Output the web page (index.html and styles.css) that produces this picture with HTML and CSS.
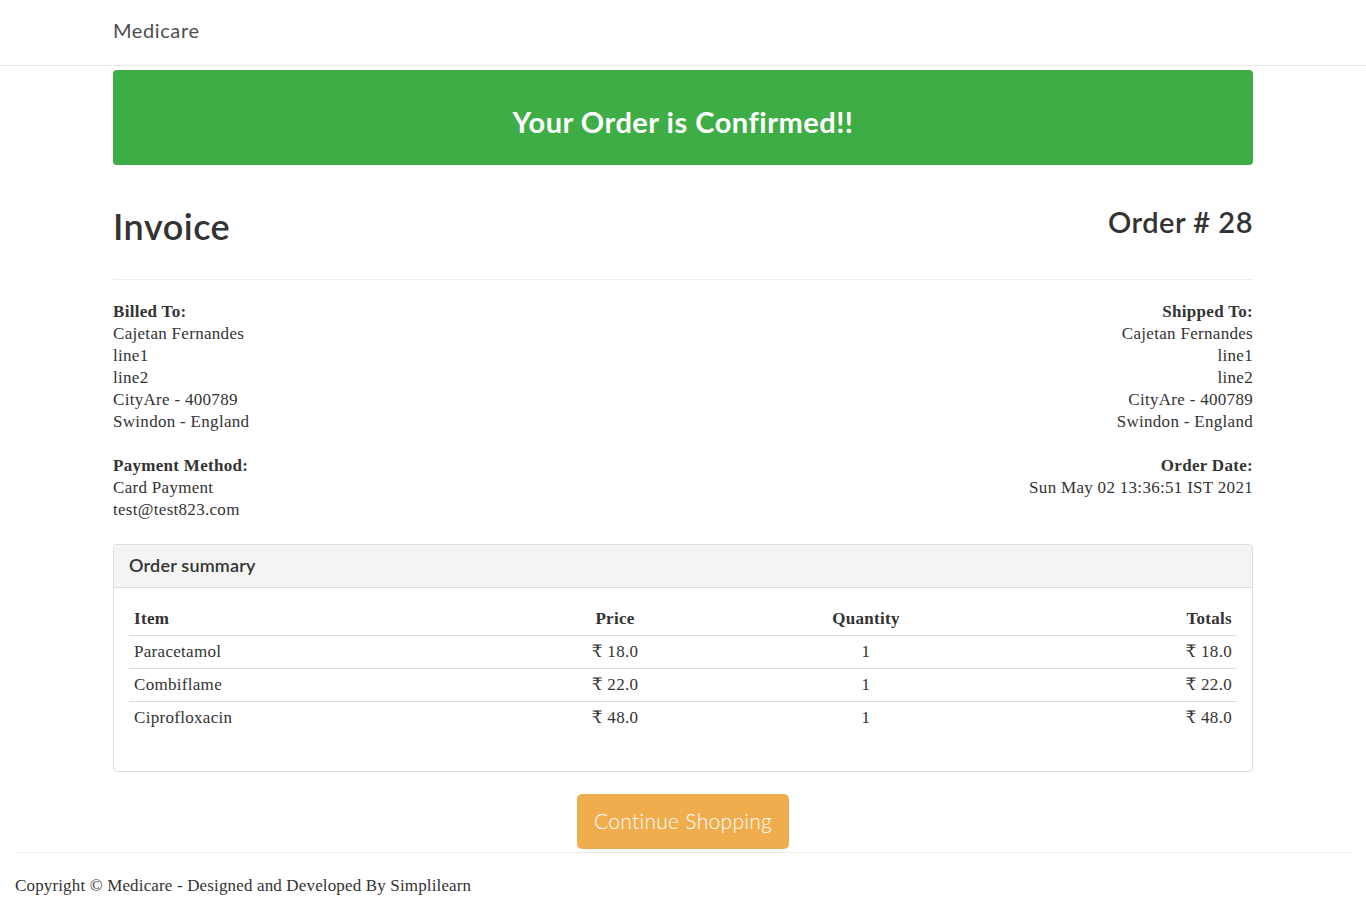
FILE: index.html
```html
<!DOCTYPE html>
<html>
<head>
<meta charset="utf-8">
<title>Medicare</title>
<link rel="stylesheet" href="styles.css">
</head>
<body>
<nav class="navbar">
  <div class="container">
    <a class="brand" href="#">Medicare</a>
  </div>
</nav>
<main class="container">
  <div class="alert-success">
    <h2 class="alert-title">Your Order is Confirmed!!</h2>
  </div>
  <div class="invoice-title">
    <h2 class="invoice-h">Invoice</h2>
    <h3 class="order-h">Order # 28</h3>
  </div>
  <hr class="rule">
  <div class="info-row">
    <address class="addr">
      <strong>Billed To:</strong><br>
      Cajetan Fernandes<br>
      line1<br>
      line2<br>
      CityAre - 400789<br>
      Swindon - England
    </address>
    <address class="addr right">
      <strong>Shipped To:</strong><br>
      Cajetan Fernandes<br>
      line1<br>
      line2<br>
      CityAre - 400789<br>
      Swindon - England
    </address>
  </div>
  <div class="info-row">
    <address class="addr">
      <strong>Payment Method:</strong><br>
      Card Payment<br>
      test@test823.com
    </address>
    <address class="addr right">
      <strong>Order Date:</strong><br>
      Sun May 02 13:36:51 IST 2021
    </address>
  </div>
  <div class="panel">
    <div class="panel-heading">
      <h3 class="panel-title">Order summary</h3>
    </div>
    <div class="panel-body">
      <table class="table">
        <thead>
          <tr>
            <th class="c-item">Item</th>
            <th class="c-price">Price</th>
            <th class="c-qty">Quantity</th>
            <th class="c-total">Totals</th>
          </tr>
        </thead>
        <tbody>
          <tr><td>Paracetamol</td><td class="c-price">₹ 18.0</td><td class="c-qty">1</td><td class="c-total">₹ 18.0</td></tr>
          <tr><td>Combiflame</td><td class="c-price">₹ 22.0</td><td class="c-qty">1</td><td class="c-total">₹ 22.0</td></tr>
          <tr><td>Ciprofloxacin</td><td class="c-price">₹ 48.0</td><td class="c-qty">1</td><td class="c-total">₹ 48.0</td></tr>
        </tbody>
      </table>
    </div>
  </div>
  <div class="actions">
    <a class="btn-warning" href="#">Continue Shopping</a>
  </div>
</main>
<footer class="footer">
  <hr class="footer-rule">
  <p class="copy">Copyright © Medicare - Designed and Developed By Simplilearn</p>
</footer>
</body>
</html>
```
FILE: styles.css
```css
* { box-sizing: border-box; }
html, body { margin: 0; padding: 0; }
body {
  font-family: "Liberation Serif", "DejaVu Serif", serif;
  font-size: 17px;
  letter-spacing: 0.3px;
  line-height: 22px;
  color: #333333;
  background: #ffffff;
}
.container {
  width: 1140px;
  margin: 0 auto;
}
.navbar {
  height: 66px;
  border-bottom: 1px solid #e7e7e7;
}
.navbar .container {
  height: 65px;
  display: flex;
  align-items: center;
}
.brand {
  font-family: "Lato", "Open Sans", sans-serif;
  font-size: 20px;
  letter-spacing: 0.6px;
  color: #4d4d4d;
  text-decoration: none;
  padding-bottom: 5px;
}
.alert-success {
  margin-top: 4px;
  height: 95px;
  background: #3fad46;
  border-radius: 4px;
  display: flex;
  align-items: center;
  justify-content: center;
}
.alert-title {
  margin: 0;
  padding-top: 8px;
  font-family: "Lato", "Open Sans", sans-serif;
  font-weight: 700;
  font-size: 29px;
  letter-spacing: 0.5px;
  color: #ffffff;
}
.invoice-title {
  display: flex;
  justify-content: space-between;
  align-items: flex-start;
  margin-top: 40px;
  height: 74px;
}
.invoice-h {
  margin: 0;
  font-family: "Lato", "Open Sans", sans-serif;
  font-weight: 600;
  font-size: 36px;
  letter-spacing: 0.5px;
  line-height: 42px;
  color: #333;
}
.order-h {
  margin: 0;
  font-family: "Lato", "Open Sans", sans-serif;
  font-weight: 600;
  font-size: 29px;
  letter-spacing: 0.5px;
  line-height: 34px;
  color: #333;
}
.rule {
  margin: 0 0 21px 0;
  border: 0;
  border-top: 1px solid #eeeeee;
}
.info-row {
  display: flex;
  justify-content: space-between;
}
.addr {
  font-style: normal;
  margin: 0 0 22px 0;
}
.addr.right { text-align: right; }
.panel {
  margin-top: 1px;
  border: 1px solid #dddddd;
  border-radius: 4px;
}
.panel-heading {
  background: #f4f4f4;
  border-bottom: 1px solid #dddddd;
  border-radius: 3px 3px 0 0;
  padding: 0 15px 3px;
  height: 43px;
  display: flex;
  align-items: center;
}
.panel-title {
  margin: 0;
  font-family: "Lato", "Open Sans", sans-serif;
  font-weight: 600;
  font-size: 18px;
  letter-spacing: 0.2px;
  color: #333;
}
.panel-body {
  padding: 15px 15px 17px;
}
.table {
  width: 100%;
  border-collapse: collapse;
  margin-bottom: 20px;
}
.table th, .table td {
  padding: 5px;
  line-height: 22px;
}
.table th {
  border-bottom: 1px solid #dddddd;
  font-weight: 700;
}
.table tbody tr + tr td { border-top: 1px solid #dddddd; }
.c-item { text-align: left; width: 396px; }
.c-price { text-align: center; width: 180px; }
.c-qty { text-align: center; width: 322px; }
.c-total { text-align: right; }
.actions {
  margin-top: 22px;
  display: flex;
  justify-content: center;
}
.btn-warning {
  display: inline-flex;
  align-items: center;
  justify-content: center;
  width: 212px;
  height: 55px;
  background: #f0ad4e;
  border-radius: 5px;
  color: #ffffff;
  font-family: "Lato", "Open Sans", sans-serif;
  font-weight: 300;
  font-size: 21px;
  text-decoration: none;
  padding-bottom: 2px;
}
.footer {
  padding: 0 15px;
}
.footer-rule {
  margin: 3px 0 22px 0;
  border: 0;
  border-top: 1px solid #eeeeee;
}
.copy {
  margin: 0;
  letter-spacing: 0.15px;
}
```
